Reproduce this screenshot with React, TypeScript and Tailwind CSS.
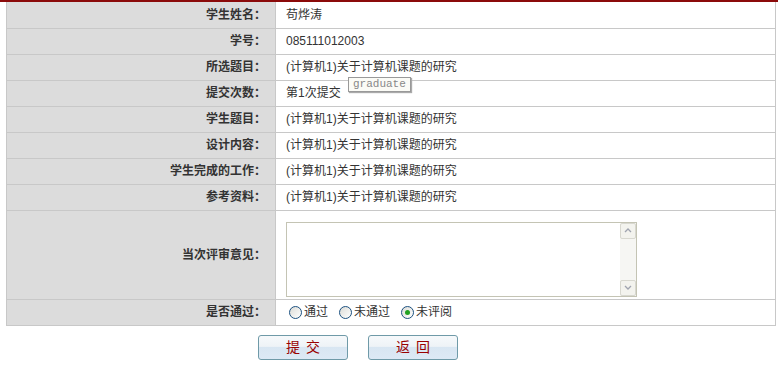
import { useState } from 'react';

const rows: [string, string][] = [
  ['学生姓名：', '苟烨涛'],
  ['学号：', '085111012003'],
  ['所选题目：', '(计算机1)关于计算机课题的研究'],
  ['提交次数：', '第1次提交'],
  ['学生题目：', '(计算机1)关于计算机课题的研究'],
  ['设计内容：', '(计算机1)关于计算机课题的研究'],
  ['学生完成的工作：', '(计算机1)关于计算机课题的研究'],
  ['参考资料：', '(计算机1)关于计算机课题的研究'],
];

const font = { fontFamily: '"Liberation Sans", "Noto Sans CJK SC", sans-serif' };

function Radio({ checked, label, onClick }: { checked: boolean; label: string; onClick: () => void }) {
  return (
    <label className="flex items-center gap-[2px] cursor-pointer" onClick={onClick}>
      <span className="w-[13px] h-[13px] rounded-full border border-[#1c5180] bg-gradient-to-br from-[#dcdcd7] to-white flex items-center justify-center">
        {checked && <span className="w-[5px] h-[5px] rounded-full bg-[#21a121]" />}
      </span>
      <span>{label}</span>
    </label>
  );
}

function Btn({ text }: { text: string }) {
  return (
    <button className="w-[90px] h-[25px] rounded-[3px] border border-[#6f9aa8] bg-[linear-gradient(#f6f9fb_0%,#eef3f7_45%,#d8e6f2_50%,#dde9f5_100%)] text-[#990000] text-[14px] tracking-[6px] pl-[6px]">
      {text}
    </button>
  );
}

export default function App() {
  const [pass, setPass] = useState(2);

  return (
    <div className="w-[778px] h-[381px] bg-white text-[12px] text-[#333]" style={font}>
      <div className="h-[2px] bg-[#8b0a0a]" />
      <table className="ml-[6px] w-[770px] border-collapse">
        <tbody>
          {rows.map(([k, v], i) => (
            <tr key={i} className="h-[26px]">
              <td className="w-[269px] bg-[#dcdcdc] border border-[#c8c8c8] border-t-0 text-right pr-[9px] font-bold">{k}</td>
              <td className="border border-[#c8c8c8] border-t-0 pl-[10px] relative">
                {v}
                {i === 3 && (
                  <span className="absolute left-[72px] top-[-4px] px-[4px] h-[15px] leading-[13px] border border-[#999] bg-[#fbfbf6] text-[#888] text-[11px] shadow-[1px_1px_1px_#aaa]" style={{ fontFamily: '"Liberation Mono", monospace' }}>
                    graduate
                  </span>
                )}
              </td>
            </tr>
          ))}
          <tr className="h-[89px]">
            <td className="bg-[#dcdcdc] border border-[#c8c8c8] text-right pr-[9px] font-bold">当次评审意见：</td>
            <td className="border border-[#c8c8c8] pl-[10px] pt-[11px] align-top">
              <div className="w-[351px] h-[75px] border border-[#c4c4b4] flex">
                <textarea className="flex-1 resize-none outline-none" />
                <div className="w-[16px] bg-[#f6f6f3] flex flex-col justify-between">
                  <div className="h-[16px] border border-[#d8d8d0] bg-[#f3f3ee] rounded-[2px] flex items-center justify-center">
                    <svg width="8" height="5" viewBox="0 0 8 5"><path d="M1 4 L4 1 L7 4" stroke="#a0a4b0" fill="none" strokeWidth="1.3" /></svg>
                  </div>
                  <div className="h-[16px] border border-[#d8d8d0] bg-[#f3f3ee] rounded-[2px] flex items-center justify-center">
                    <svg width="8" height="5" viewBox="0 0 8 5"><path d="M1 1 L4 4 L7 1" stroke="#a0a4b0" fill="none" strokeWidth="1.3" /></svg>
                  </div>
                </div>
              </div>
            </td>
          </tr>
          <tr className="h-[26px]">
            <td className="bg-[#dcdcdc] border border-[#c8c8c8] text-right pr-[9px] font-bold">是否通过：</td>
            <td className="border border-[#c8c8c8] pl-[13px]">
              <div className="flex items-center gap-[11px]">
                {['通过', '未通过', '未评阅'].map((t, i) => (
                  <Radio key={t} label={t} checked={pass === i} onClick={() => setPass(i)} />
                ))}
              </div>
            </td>
          </tr>
        </tbody>
      </table>
      <div className="flex gap-[20px] ml-[258px] mt-[9px]">
        <Btn text="提交" />
        <Btn text="返回" />
      </div>
    </div>
  );
}
